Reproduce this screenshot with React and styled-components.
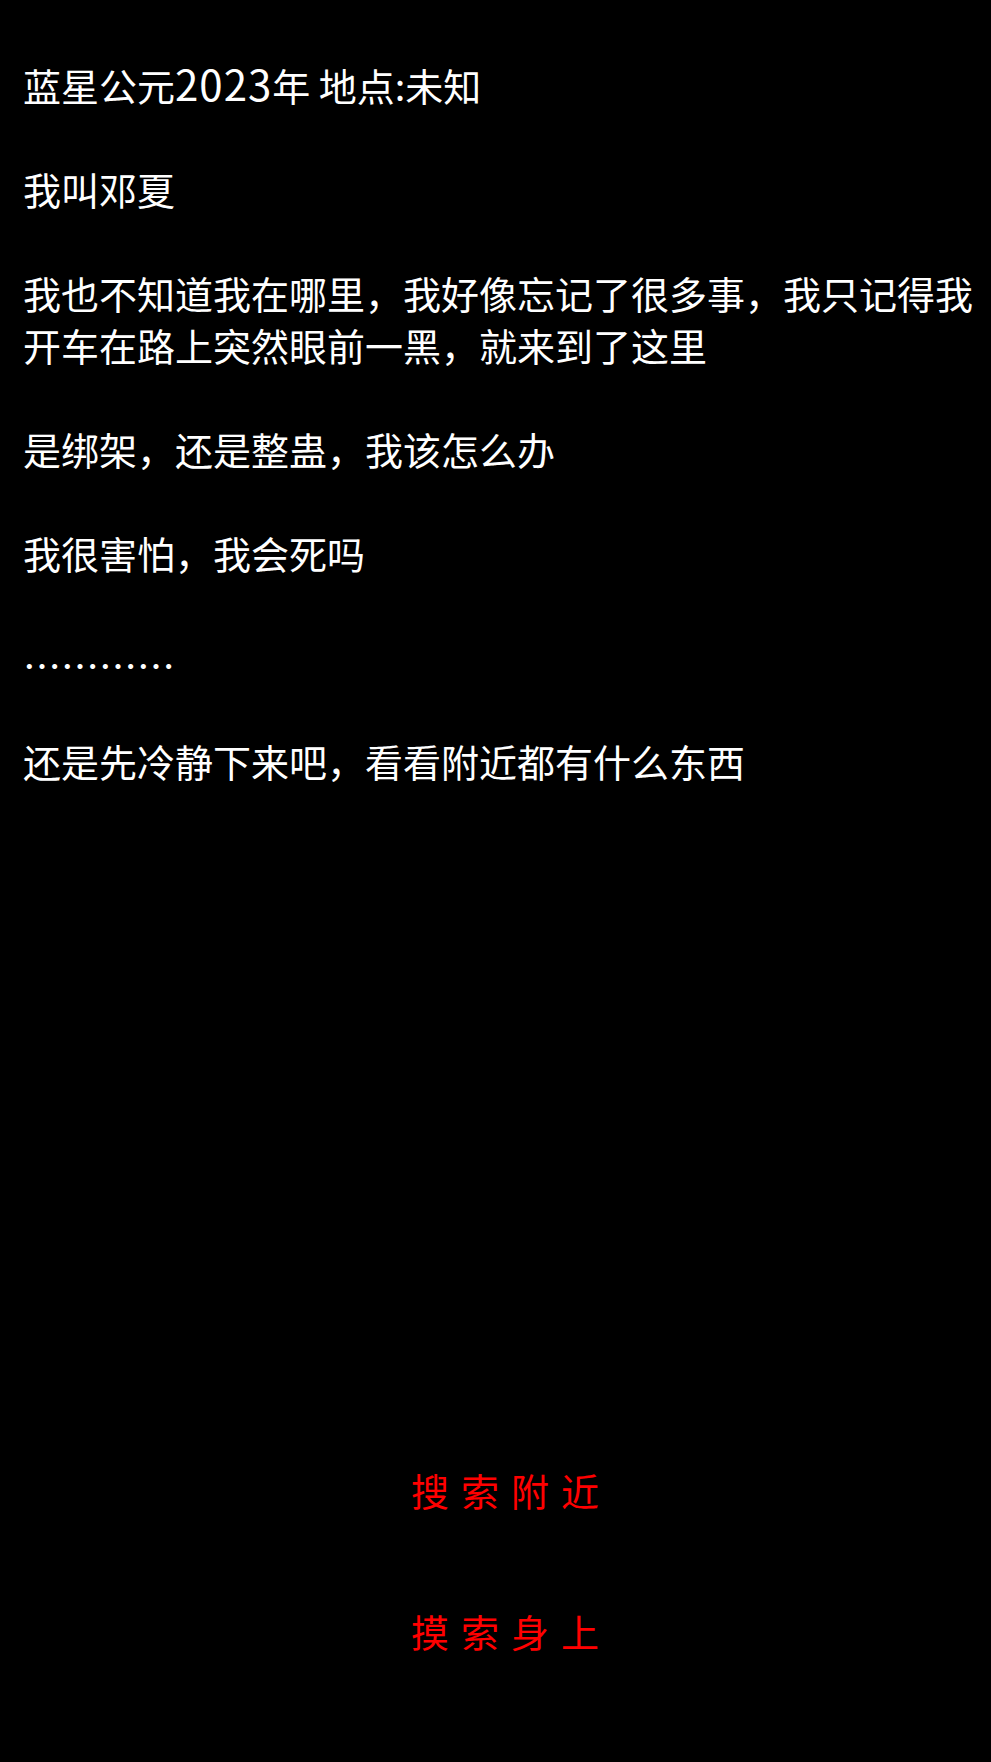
// Imports
import styled, {createGlobalStyle} from 'styled-components'


// Styles
const GlobalStyle = createGlobalStyle`
    html, body {
        margin:0;
        padding:0;
        background:#000;
    }
    body {
        font-family:"Noto Sans CJK SC", "Noto Sans", sans-serif;
    }
`
const Page = styled.div`
    min-height:1762px;
    display:flex;
    flex-direction:column;
    background:#000;
    color:#fff;
    box-sizing:border-box;
`
const Story = styled.div`
    padding:59px 18px 0 23px;
`
const Paragraph = styled.p`
    margin:0 0 ${({$low}) => $low ? '44px' : '52px'};
    padding-top:${({$low}) => $low ? '8px' : '0'};
    font-size:38px;
    line-height:52px;
    color:#fff;
`
const Latin = styled.span`
    font-size:42px;
    line-height:0;
    letter-spacing:1px;
`
const Spacer = styled.div`
    flex:1;
`
const Choices = styled.nav`
    display:flex;
    flex-direction:column;
    align-items:center;
    gap:89px;
    padding:0 0 105px 31px;
`
const Choice = styled.button`
    background:none;
    border:none;
    padding:0;
    cursor:pointer;
    font-family:inherit;
    font-size:38px;
    line-height:52px;
    letter-spacing:12px;
    color:#f00;
`


// Main Function
const App = () => {
    return (
        <Page>
            <GlobalStyle />
            <Story>
                <Paragraph>蓝星公元<Latin>2023</Latin>年 地点:未知</Paragraph>
                <Paragraph>我叫邓夏</Paragraph>
                <Paragraph>我也不知道我在哪里，我好像忘记了很多事，我只记得我开车在路上突然眼前一黑，就来到了这里</Paragraph>
                <Paragraph>是绑架，还是整蛊，我该怎么办</Paragraph>
                <Paragraph>我很害怕，我会死吗</Paragraph>
                <Paragraph $low>…………</Paragraph>
                <Paragraph>还是先冷静下来吧，看看附近都有什么东西</Paragraph>
            </Story>
            <Spacer />
            <Choices>
                <Choice>搜索附近</Choice>
                <Choice>摸索身上</Choice>
            </Choices>
        </Page>
    )
}


// Export
export default App;
